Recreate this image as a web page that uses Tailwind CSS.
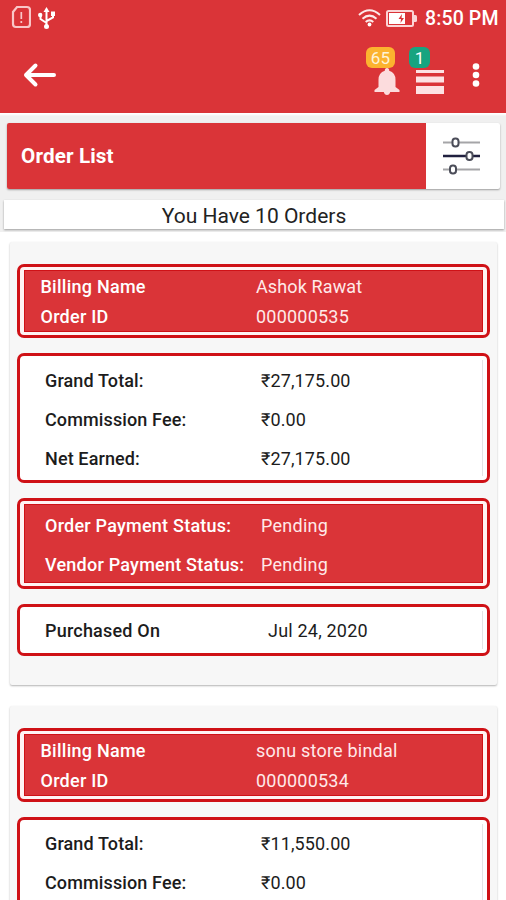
<!DOCTYPE html>
<html lang="en">
<head>
<meta charset="utf-8">
<title>Order List</title>
<script src="https://cdn.jsdelivr.net/npm/@tailwindcss/browser@4"></script>
</head>
<body class="w-[506px] h-[900px] overflow-hidden bg-white font-['Roboto','Noto_Sans',sans-serif] text-[18px] tracking-[0.12px] text-[#1c1c1c]">
<header class="h-[113px] bg-[#da3438] text-white">
  <div class="flex h-[36px] items-center pl-[11px] pr-[8px]">
    <svg class="mt-[-3px]" width="20" height="24" viewBox="0 0 20 24" fill="none" stroke="#f9c6c7" stroke-width="2.200"><path d="M6 2H16Q19 2 19 5V19Q19 22 16 22H5Q2 22 2 19V7Z"/><path d="M10.300 7V14M10.300 16V18" stroke-width="1.700"/></svg>
    <svg class="ml-[6px] mt-[-1px]" width="19" height="24" viewBox="0 0 19 24" fill="none" stroke="#fff" stroke-width="2"><path d="M9.500 4V20M9.500 17L3.500 13V10M9.500 15L16 11.500V8"/><path d="M6.500 6L9.500 1L12.500 6Z" fill="#fff" stroke="none"/><circle cx="3.200" cy="9" r="2.200" fill="#fff" stroke="none"/><path d="M14 5.500H18V10H14Z" fill="#fff" stroke="none"/><circle cx="9.500" cy="20.500" r="2.500" fill="#fff" stroke="none"/></svg>
    <svg class="ml-auto" width="23" height="18" viewBox="0 0 23 18" fill="none" stroke="#fde9e9" stroke-width="2"><path d="M1 6Q11.500 -3.500 22 6M4.500 9.700Q11.500 3.500 18.500 9.700M7.700 13Q11.500 9.800 15.300 13"/><circle cx="11.500" cy="15.500" r="1.900" fill="#fff" stroke="none"/></svg>
    <svg class="ml-[5px]" width="31" height="17" viewBox="0 0 31 17"><rect x="1" y="1" width="26" height="15" rx="1.500" fill="none" stroke="#fbd5d6" stroke-width="2"/><path d="M28 5H29.500Q31 5 31 6.500V10.500Q31 12 29.500 12H28Z" fill="#fbd5d6"/><rect x="3" y="3" width="16" height="11" fill="#fff"/><path d="M16 4L12.500 9H15L14.500 13L18 8H15.500Z" fill="#da3438"/></svg>
    <span class="ml-[8px] mt-[2px] w-[73px] whitespace-nowrap text-[19.500px] font-medium leading-[24px]">8:50 PM</span>
  </div>
  <div class="flex h-[77px] items-start pl-[23px]">
    <svg class="mt-[26px]" width="34" height="26" viewBox="0 0 34 26" fill="none" stroke="#fff" stroke-width="4" stroke-linecap="round" stroke-linejoin="round"><path d="M31 13H3M12.500 3.500L3 13L12.500 22.500"/></svg>
    <div class="relative ml-[317px] mt-[32px] h-[28px] w-[26px]">
      <svg width="26" height="28" viewBox="0 0 26 28" fill="#fcdcdd"><path d="M13 0Q15.200 0 15.200 2.800Q21.500 4.500 21.500 12V19L25.500 22V24H.500V22L4.500 19V12Q4.500 4.500 10.800 2.800Q10.800 0 13 0ZM9.800 24H16.200Q15.500 27 13 27Q10.500 27 9.800 24Z"/></svg>
      <span class="absolute -top-[21px] -left-[8px] h-[21px] w-[29px] rounded-[6px] bg-[#fcb32f] text-center text-[17px] tracking-[0.2px] leading-[22px] text-[#fff3d8]">65</span>
    </div>
    <div class="relative ml-[16px] mt-[33px] h-[26px] w-[28px]">
      <svg width="28" height="26" viewBox="0 0 28 26" fill="#fde2e3"><path d="M0 1H28V4H0ZM0 7.500H28V13.500H0ZM0 17H28V25H0Z"/></svg>
      <span class="absolute -top-[22px] -left-[7px] h-[21px] w-[21px] rounded-[6px] bg-[#17a480] text-center text-[17px] leading-[22px]">1</span>
    </div>
    <svg class="ml-[28px] mt-[26px]" width="8" height="26" viewBox="0 0 8 26" fill="#fff"><circle cx="4" cy="4.500" r="3.300"/><circle cx="4" cy="13" r="3.300"/><circle cx="4" cy="21.500" r="3.300"/></svg>
  </div>
</header>
<section class="h-[119px] bg-[#f0f0f0] pt-[10px] shadow-[inset_0_3px_2px_-1px_#fff]">
  <div class="ml-[7px] flex h-[66px] w-[493px] rounded-[2px] bg-white shadow-[0_1px_2px_rgba(0,0,0,0.35)]">
    <h1 class="flex w-[419px] items-center rounded-l-[2px] bg-[#da3438] pl-[14px] pt-[2px] text-[20.700px] font-bold text-white"><span>Order List</span></h1>
    <svg class="ml-[17px] mt-[13px]" width="38" height="40" viewBox="0 0 38 40" fill="none" stroke-width="2"><path d="M0 6.500H37M0 33.500H37" stroke="#a5a5a8"/><path d="M0 20H37" stroke="#20203f" stroke-width="2.400"/><g fill="#fff" stroke="#4b4d59"><rect x="9.500" y="2.500" width="6" height="8" rx="2.800"/><rect x="23.500" y="16" width="6" height="8" rx="2.800"/><rect x="7" y="29.500" width="6" height="8" rx="2.800"/></g></svg>
  </div>
  <p class="ml-[4px] mt-[11px] h-[29px] w-[500px] bg-white text-center text-[21px] leading-[33px] tracking-normal text-[#222] shadow-[0_1px_2px_rgba(0,0,0,0.35)]">You Have 10 Orders</p>
</section>
<main class="flex h-[668px] flex-col gap-[21px] overflow-hidden pl-[10px] pt-[10px]">
  <article class="flex h-[443px] w-[487px] shrink-0 flex-col gap-[15px] rounded-[2px] bg-[#f7f7f7] pl-[7px] pt-[22px] shadow-[0_1px_2px_rgba(0,0,0,0.3)]">
    <div class="h-[74px] w-[473px] rounded-[7px] border-[3px] border-[#cf1116] bg-[#fff3f3] px-[4px] py-[3px]">
      <dl class="grid h-full grid-cols-[215.500px_1fr] content-start border border-[#cf1116] bg-[#da3438] pl-[15.500px] pt-[1px] leading-[30px] text-[#ffe9e9]"><dt class="font-medium tracking-[0.25px] text-white">Billing Name</dt><dd>Ashok Rawat</dd><dt class="font-medium tracking-[0.25px] text-white">Order ID</dt><dd class="tracking-[0.22px]">000000535</dd></dl>
    </div>
    <div class="h-[130px] w-[473px] rounded-[7px] border-[3px] border-[#cf1116] bg-white p-[4px]">
      <dl class="grid h-full grid-cols-[216px_1fr] content-start border-r border-[#e4e4e4] pl-[21px] pt-[1px] leading-[39px]"><dt class="font-medium">Grand Total:</dt><dd>₹27,175.00</dd><dt class="font-medium">Commission Fee:</dt><dd>₹0.00</dd><dt class="font-medium">Net Earned:</dt><dd>₹27,175.00</dd></dl>
    </div>
    <div class="h-[91px] w-[473px] rounded-[7px] border-[3px] border-[#cf1116] bg-[#fff3f3] px-[4px] py-[3px]">
      <dl class="grid h-full grid-cols-[216px_1fr] content-start border border-[#cf1116] bg-[#da3438] pl-[20px] pt-[1px] leading-[39px] text-[#ffe9e9]"><dt class="font-medium tracking-[0.23px] whitespace-nowrap text-white">Order Payment Status:</dt><dd class="tracking-[0.25px]">Pending</dd><dt class="font-medium tracking-[0.23px] whitespace-nowrap text-white">Vendor Payment Status:</dt><dd class="tracking-[0.25px]">Pending</dd></dl>
    </div>
    <div class="h-[52px] w-[473px] rounded-[7px] border-[3px] border-[#cf1116] bg-white p-[4px]">
      <dl class="grid h-full grid-cols-[223px_1fr] content-start border-r border-[#e4e4e4] pl-[21px] leading-[40px]"><dt class="font-medium tracking-[0.2px]">Purchased On</dt><dd class="tracking-[0.2px]">Jul 24, 2020</dd></dl>
    </div>
  </article>
  <article class="flex h-[443px] w-[487px] shrink-0 flex-col gap-[15px] rounded-[2px] bg-[#f7f7f7] pl-[7px] pt-[22px] shadow-[0_1px_2px_rgba(0,0,0,0.3)]">
    <div class="h-[74px] w-[473px] rounded-[7px] border-[3px] border-[#cf1116] bg-[#fff3f3] px-[4px] py-[3px]">
      <dl class="grid h-full grid-cols-[215.500px_1fr] content-start border border-[#cf1116] bg-[#da3438] pl-[15.500px] pt-[1px] leading-[30px] text-[#ffe9e9]"><dt class="font-medium tracking-[0.25px] text-white">Billing Name</dt><dd class="tracking-[0.22px]">sonu store bindal</dd><dt class="font-medium tracking-[0.25px] text-white">Order ID</dt><dd class="tracking-[0.22px]">000000534</dd></dl>
    </div>
    <div class="h-[130px] w-[473px] rounded-[7px] border-[3px] border-[#cf1116] bg-white p-[4px]">
      <dl class="grid h-full grid-cols-[216px_1fr] content-start border-r border-[#e4e4e4] pl-[21px] leading-[39px]"><dt class="font-medium">Grand Total:</dt><dd>₹11,550.00</dd><dt class="font-medium">Commission Fee:</dt><dd>₹0.00</dd></dl>
    </div>
  </article>
</main>
</body>
</html>
